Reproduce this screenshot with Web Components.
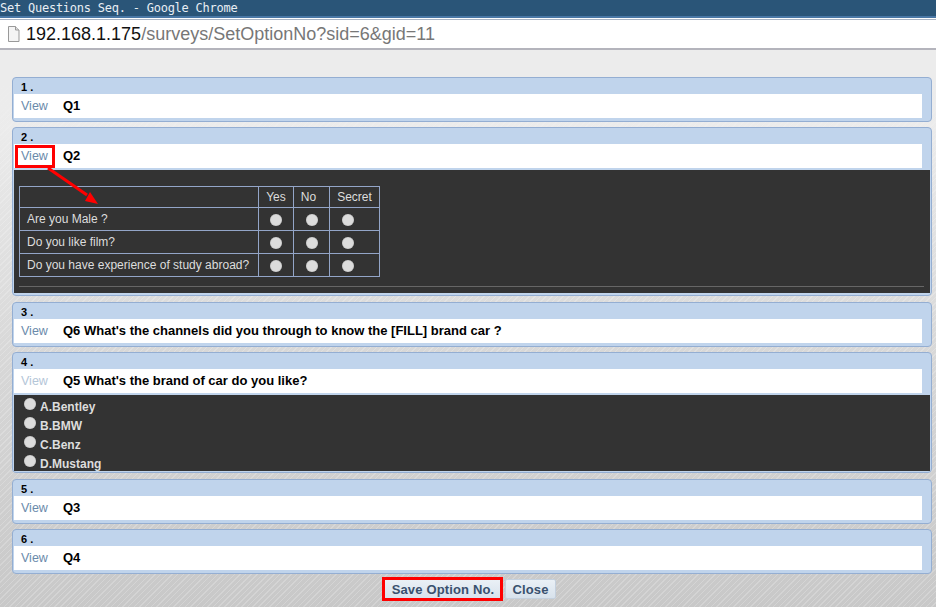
<!DOCTYPE html>
<html><head><meta charset="utf-8">
<style>
html,body{margin:0;padding:0;height:607px;overflow:hidden}
body{font-family:"Liberation Sans",Arial,sans-serif;width:936px;display:flex;flex-direction:column;position:relative}
</style></head><body>
<title-bar>Set Questions Seq. - Google Chrome</title-bar>
<address-bar></address-bar>
<survey-page>
  <q-panel num="1" label="Q1" h="45"></q-panel>
  <q-panel num="2" label="Q2" h="169" marked gap="5">
    <matrix-body></matrix-body>
  </q-panel>
  <q-panel num="3" label="Q6 What's the channels did you through to know the [FILL] brand car ?" h="45" gap="6"></q-panel>
  <q-panel num="4" label="Q5 What's the brand of car do you like?" h="121" faint gap="5">
    <choice-body></choice-body>
  </q-panel>
  <q-panel num="5" label="Q3" h="45" gap="6"></q-panel>
  <q-panel num="6" label="Q4" h="45" gap="5"></q-panel>
  <button-row></button-row>
</survey-page>
<script>
function def(name,html,init){customElements.define(name,class extends HTMLElement{
  constructor(){super();this.attachShadow({mode:'open'}).innerHTML=html}
  connectedCallback(){if(init)init.call(this,this.shadowRoot)}
})}
def('title-bar',`<style>:host{display:block;height:16px;background:#2a5578;border-bottom:2px solid #4a78a6;color:#e8eef4;font:12px/16px "DejaVu Sans Mono",monospace;letter-spacing:-.24px;white-space:pre;flex:none}
</style><slot></slot>`);
def('address-bar',`<style>:host{display:flex;align-items:center;height:28px;margin-top:1px;background:#fff;border-top:1px solid #a9b4c4;border-bottom:2px solid #b4b4bc;box-sizing:content-box;flex:none;font:18px "Liberation Sans",sans-serif;color:#777;padding-left:7px;gap:6px}
b{font-weight:400;color:#111}svg{display:block;flex:none}</style>
<svg width="13" height="16" viewBox="0 0 13 16"><path d="M1.5.5h7l3.5 3.5v11.5h-10.500z" fill="#f4f4f4" stroke="#999"/><path d="M8.500.5v3.500h3.500" fill="#ddd" stroke="#999"/></svg>
<span><b>192.168.1.175</b>/surveys/SetOptionNo?sid=6&amp;gid=11</span>`);
def('survey-page',`<style>:host{display:block;flex:1;padding:27px 4px 0 12px;
background:linear-gradient(#ececec 0,#ececec 30px,rgba(232,232,232,0) 130px),repeating-linear-gradient(135deg,rgba(255,255,255,.2) 0 1px,transparent 1px 4px),linear-gradient(#ececec 0,#ececec 60px,#d8d8d8 300px,#c8c8c8 100%)}</style><slot></slot>`);
def('q-panel',`<style>:host{display:block;box-sizing:border-box;background:#c0d4ec;border:1px solid #94aed2;border-radius:4px;padding:0 9px 0 1px;overflow:hidden;position:relative}
.n{height:16px;font:bold 11px/18px "Liberation Sans",sans-serif;color:#000;padding-left:7px}
.r{display:flex;height:24px;background:#fff;align-items:center;font-size:13px}
.v{width:49px;padding-left:7px;box-sizing:border-box;color:#6b8aab;font-size:12.500px;position:relative}
.q{font-weight:700;color:#000;font-size:13px;margin-top:-2px}
:host([faint]) .v{color:#b4c6d8}
:host([marked]) .v::after{content:"";position:absolute;left:1px;top:-4px;width:34px;height:17px;border:3px solid #f00}
.b{margin:2px -8px 0 0}
</style><div class="n"></div><div class="r"><span class="v">View</span><span class="q"></span></div><div class="b"><slot></slot></div>`,
function(s){s.querySelector('.n').textContent=this.getAttribute('num')+' .';s.querySelector('.q').textContent=this.getAttribute('label');this.style.height=this.getAttribute('h')+'px';this.style.marginTop=(this.getAttribute('gap')||0)+'px'});
def('matrix-body',`<style>:host{display:block;background:#333;height:123px;box-sizing:border-box;padding:16px 5px 0;color:#ddd;font-size:12px;position:relative}
table{border-collapse:collapse}td,th{border:1px solid #93a5c8;padding:0;font-weight:400;height:22px}
td{padding-top:2px;height:20px}
td:first-child{padding:0 8px 1px 7px;width:223px;box-sizing:content-box;white-space:nowrap}
td:not(:first-child){padding-left:11px;line-height:0}
td:nth-child(n+3){padding-left:12px}
.y{width:34px}.o{width:29px;padding-right:6px}.s{width:49px}
tr:first-child th{height:20px}
i{display:inline-block;width:12px;height:12px;border-radius:50%;background:#dcdcdc;vertical-align:middle;box-shadow:inset 0 0 1px #999}
hr{border:0;border-top:1px solid #666;margin:9px 2px 0 0;width:905px}
</style>
<table><tr><th></th><th class="y">Yes</th><th class="o">No</th><th class="s">Secret</th></tr>
<tr><td>Are you Male ?</td><td><i></i></td><td><i></i></td><td><i></i></td></tr>
<tr><td>Do you like film?</td><td><i></i></td><td><i></i></td><td><i></i></td></tr>
<tr><td>Do you have experience of study abroad?</td><td><i></i></td><td><i></i></td><td><i></i></td></tr></table><hr>
<svg style="position:absolute;left:30px;top:-2px;overflow:visible" width="60" height="40"><path d="M4 0L43 27" stroke="#f00" stroke-width="3"/><path d="M54 36L41 33L46 24z" fill="#f00"/></svg>`);
def('choice-body',`<style>:host{display:block;background:#333;height:76px;overflow:hidden;box-sizing:border-box;padding:2px 0 0 10px;color:#ddd;font:bold 12px "Liberation Sans",sans-serif}
div{display:flex;height:19px;gap:4px;align-items:flex-start}i{display:block;width:12px;height:12px;border-radius:50%;background:#dcdcdc;box-shadow:inset 0 0 1px #999;margin-top:1px}span{margin-top:3px}
</style><div><i></i><span>A.Bentley</span></div><div><i></i><span>B.BMW</span></div><div><i></i><span>C.Benz</span></div><div><i></i><span>D.Mustang</span></div>`);
def('button-row',`<style>:host{display:flex;justify-content:center;align-items:center;gap:2px;height:24px;margin:3px 0 0 0;font:bold 13px "Liberation Sans",sans-serif;color:#39506e;padding-right:6px}
.b{box-sizing:border-box;background:linear-gradient(#eaf0f6,#d8e2ec);border:1px solid #c4d0de;border-radius:2px;height:20px;display:flex;align-items:center;justify-content:center;letter-spacing:.15px}
.s{width:121px;height:24px;border:3px solid #f00;border-radius:0;padding-left:1px}.c{width:51px}
</style><div class="b s">Save Option No.</div><div class="b c">Close</div>`);
</script>
</body></html>
